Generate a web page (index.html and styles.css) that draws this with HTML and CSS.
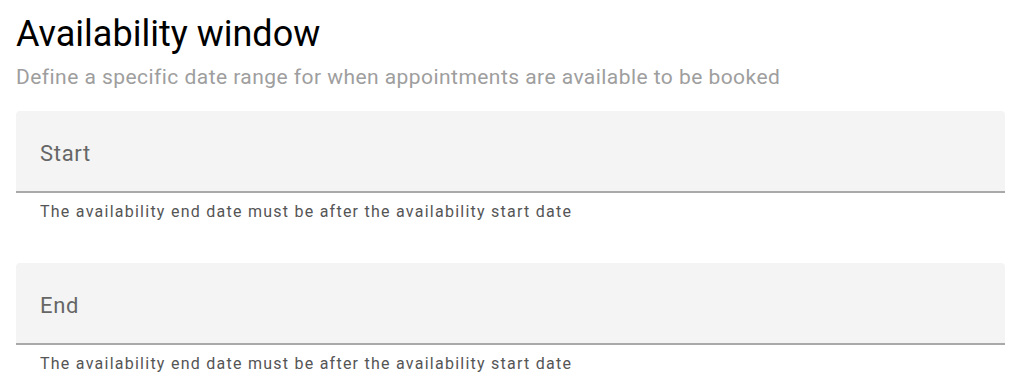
FILE: index.html
```html
<!DOCTYPE html>
<html>
<head>
<meta charset="utf-8">
<link rel="stylesheet" href="styles.css">
</head>
<body>
<div class="page">
  <h1 class="title">Availability window</h1>
  <p class="subtitle">Define a specific date range for when appointments are available to be booked</p>
  <div class="field">
    <div class="field-box"><span class="field-label">Start</span></div>
    <div class="helper">The availability end date must be after the availability start date</div>
  </div>
  <div class="field">
    <div class="field-box"><span class="field-label">End</span></div>
    <div class="helper">The availability end date must be after the availability start date</div>
  </div>
</div>
</body>
</html>
```
FILE: styles.css
```css
html, body {
  margin: 0;
  padding: 0;
  background: #ffffff;
}
body {
  font-family: Roboto, "Noto Sans", sans-serif;
}
.page {
  padding: 12px 19px 0 16px;
  display: flex;
  flex-direction: column;
}
.title {
  margin: 0;
  font-size: 36px;
  font-weight: 400;
  line-height: 44px;
  color: #000000;
}
.subtitle {
  margin: 7px 0 0 0;
  font-size: 21px;
  line-height: 28px;
  color: #9e9e9e;
  letter-spacing: 0.45px;
}
.field {
  margin-top: 20px;
  display: flex;
  flex-direction: column;
}
.field + .field {
  margin-top: 41px;
}
.field-box {
  height: 75px;
  padding-top: 5px;
  padding-left: 24px;
  background: #f4f4f4;
  border-radius: 4px 4px 0 0;
  border-bottom: 2px solid #a9a9a9;
  display: flex;
  align-items: center;
}
.field-label {
  font-size: 22px;
  color: #666666;
  letter-spacing: 0.7px;
}
.helper {
  padding-left: 24px;
  margin-top: 9px;
  font-size: 16px;
  line-height: 20px;
  color: #555555;
  letter-spacing: 1.25px;
}
```
